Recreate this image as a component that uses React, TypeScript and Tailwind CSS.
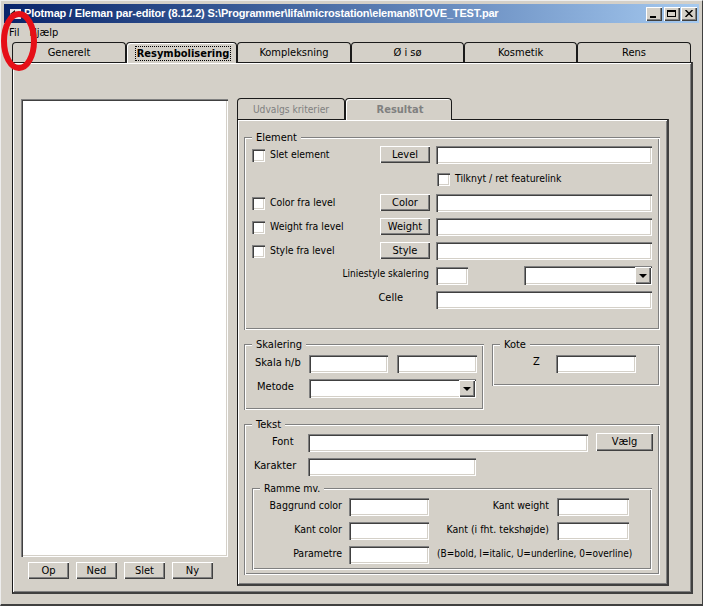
const sunken = "bg-white shadow-[inset_1px_1px_0_#808080,inset_2px_2px_0_#404040,inset_-1px_-1px_0_#ffffff,inset_-2px_-2px_0_#d4d0c8]";
const raised = "bg-[#d4d0c8] shadow-[inset_1px_1px_0_#ffffff,inset_-1px_-1px_0_#404040,inset_-2px_-2px_0_#808080]";
const etched = "shadow-[inset_1px_1px_0_#808080,inset_2px_2px_0_#ffffff,inset_-1px_-1px_0_#ffffff,inset_-2px_-2px_0_#808080]";

function Input({ w, className = "" }: { w: string; className?: string }) {
  return <div className={`${sunken} h-[18px] shrink-0 ${w} ${className}`} />;
}
function Btn({ label, w = "w-[50px]", h = "h-[17px]", className = "" }: { label: string; w?: string; h?: string; className?: string }) {
  return <div className={`${raised} ${w} ${h} shrink-0 flex items-center justify-center pb-px ${className}`}>{label}</div>;
}
function Check({ label, w = "w-[110px]" }: { label: string; w?: string }) {
  return (
    <div className={`flex items-center gap-[5px] ${w} shrink-0`}>
      <div className={`${sunken} w-[13px] h-[13px]`} />
      <span className="pb-[2px] text-[10.4px]">{label}</span>
    </div>
  );
}
function Arrow() {
  return (
    <div className={`${raised} absolute right-[1px] top-[1px] w-[16px] h-[17px] flex items-center justify-center`}>
      <svg width="8" height="4" viewBox="0 0 8 4"><path d="M0 0h8L4 4z" fill="#000" /></svg>
    </div>
  );
}
function Combo({ w }: { w: string }) {
  return (
    <div className={`${sunken} relative h-[19px] shrink-0 ${w}`}>
      <Arrow />
    </div>
  );
}
function Legend({ text, left = "left-[8px]" }: { text: string; left?: string }) {
  return <span className={`absolute ${left} top-[-6px] bg-[#d4d0c8] px-[4px] leading-[13px]`}>{text}</span>;
}
function ElementRow({ check, btn, mb = "mb-[6px]" }: { check: string; btn: string; mb?: string }) {
  return (
    <div className={`flex items-start h-[18px] ${mb}`}>
      <div className="flex items-center h-[18px]"><Check label={check} w="w-[128px]" /></div>
      <Btn label={btn} />
      <Input w="w-[216px]" className="ml-[6px]" />
    </div>
  );
}
function Tab({ label, w, h, active = false, focus = false, disabled = false, small = false }: { label: string; w: string; h: string; active?: boolean; focus?: boolean; disabled?: boolean; small?: boolean }) {
  return (
    <div
      className={`${w} ${h} shrink-0 flex items-center justify-center rounded-t-[4px] border-t border-l border-r border-[#1a1a1a] bg-[#d4d0c8] ${
        active ? "font-bold relative z-10 border-b-0 pl-[3px] shadow-[inset_1px_1px_0_#ffffff]" : ""
      } ${disabled ? "text-[#808080]" : "text-black"} ${small ? "text-[10.2px]" : ""}`}
    >
      <span className={focus ? "outline-1 outline-dotted outline-black px-px leading-[13px]" : ""}>{label}</span>
    </div>
  );
}

export default function App() {
  return (
    <div className="relative w-[703px] h-[606px] overflow-hidden bg-[#d4d0c8] border-t-[1px] border-l-[1px] border-t-[#eeeeee] border-l-[#eeeeee] border-r-[1px] border-b-[2px] border-r-[#404040] border-b-[#404040] pt-[3px] px-[3px] text-[11px] leading-[13px] text-black font-['DejaVu_Sans_Condensed','Liberation_Sans',sans-serif]">
      {/* title bar */}
      <div className="h-[19px] flex items-center pl-[5px] pr-[2px] bg-gradient-to-r from-[#0a246a] to-[#a6caf0]">
        <svg width="14" height="14" viewBox="0 0 14 14" className="shrink-0">
          <rect x="1" y="2" width="11" height="10" fill="#e8e8e8" />
          <path d="M1 7l5-4v8z" fill="#111" />
        </svg>
        <span className="ml-px text-white font-bold text-[11px] tracking-[-0.18px] whitespace-nowrap font-['Liberation_Sans',Arial,sans-serif]">Plotmap / Eleman par-editor (8.12.2) S:\Programmer\lifa\microstation\eleman8\TOVE_TEST.par</span>
        <div className="ml-auto flex items-center">
          <div className={`${raised} w-[16px] h-[14px] flex items-end pl-[4px] pb-[3px]`}><div className="w-[6px] h-[2px] bg-black" /></div>
          <div className={`${raised} w-[16px] h-[14px] ml-[2px] p-[3px] pr-[4px] pb-[4px]`}><div className="w-full h-full border border-t-2 border-black" /></div>
          <div className={`${raised} w-[16px] h-[14px] ml-px flex items-center justify-center`}>
            <svg width="8" height="7" viewBox="0 0 8 7"><path d="M0.5 0L7.5 7M7.5 0L0.5 7" stroke="#000" strokeWidth="1.5" /></svg>
          </div>
        </div>
      </div>
      {/* menu */}
      <div className="h-[19px] flex items-center pl-[5px] gap-[10px]">
        <span>Fil</span>
        <span>Hjælp</span>
      </div>
      {/* tabs */}
      <div className="flex ml-[8px] h-[20px] mr-[6px]">
        <Tab label="Generelt" w="w-[114px]" h="h-[20px]" />
        <Tab label="Resymbolisering" w="w-[111px]" h="h-[21px]" active focus />
        <Tab label="Kompleksning" w="w-[114px]" h="h-[20px]" />
        <Tab label="Ø i sø" w="w-[113px]" h="h-[20px]" />
        <Tab label="Kosmetik" w="w-[113px]" h="h-[20px]" />
        <Tab label="Rens" w="w-[114px]" h="h-[20px]" />
      </div>
      {/* tab panel */}
      <div className="ml-[8px] w-[681px] h-[532px] border-t border-l border-[#1a1a1a] border-r-2 border-b-2 border-r-[#404040] border-b-[#404040] shadow-[inset_1px_1px_0_#ffffff,inset_-1px_-1px_0_#808080] flex pt-[36px] pl-[8px]">
        {/* left column */}
        <div className="w-[208px] shrink-0">
          <div className={`${sunken} h-[458px] w-[207px]`} />
          <div className="flex gap-[7px] pl-[7px] mt-[5px]">
            <Btn label="Op" w="w-[41px]" />
            <Btn label="Ned" w="w-[41px]" />
            <Btn label="Slet" w="w-[41px]" />
            <Btn label="Ny" w="w-[41px]" />
          </div>
        </div>
        {/* right column */}
        <div className="ml-[8px] w-[432px] shrink-0 -mt-[1px]">
          <div className="flex h-[21px]">
            <Tab label="Udvalgs kriterier" w="w-[108px]" h="h-[21px]" disabled small />
            <Tab label="Resultat" w="w-[107px]" h="h-[22px]" active disabled />
          </div>
          <div className="h-[467px] border-t border-l border-[#1a1a1a] border-r-2 border-b-2 border-r-[#404040] border-b-[#404040] shadow-[inset_1px_1px_0_#ffffff,inset_-1px_-1px_0_#808080] pt-[17px] pl-[6px]">
            {/* Element */}
            <div className={`${etched} relative w-[416px] h-[193px] pt-[9px] pl-[8px]`}>
              <Legend text="Element" />
              <ElementRow check="Slet element" btn="Level" mb="mb-[8px]" />
              <div className="flex items-center h-[14px] pl-[185px] mb-[8px]">
                <Check label="Tilknyt / ret featurelink" w="w-[200px]" />
              </div>
              <ElementRow check="Color fra level" btn="Color" />
              <ElementRow check="Weight fra level" btn="Weight" />
              <ElementRow check="Style fra level" btn="Style" />
              <div className="flex items-center h-[19px] mb-[6px]">
                <span className="w-[177px] text-right pb-[5px] text-[10px]">Liniestyle skalering</span>
                <Input w="w-[32px]" className="ml-[7px]" />
                <Combo w="w-[128px] ml-[56px]" />
              </div>
              <div className="flex items-center h-[18px]">
                <span className="w-[152px] text-right pr-px pb-[5px]">Celle</span>
                <Input w="w-[216px]" className="ml-[32px]" />
              </div>
            </div>
            {/* Skalering + Kote */}
            <div className="flex mt-[14px] gap-[8px]">
              <div className={`${etched} relative w-[240px] h-[66px] pt-[11px] pl-[11px]`}>
                <Legend text="Skalering" />
                <div className="flex items-center h-[18px]">
                  <span className="w-[54px] pb-[4px]">Skala h/b</span>
                  <Input w="w-[79px]" />
                  <Input w="w-[80px]" className="ml-[9px]" />
                </div>
                <div className="flex items-center h-[19px] mt-[6px]">
                  <span className="w-[54px] pl-[2px] pb-[5px]">Metode</span>
                  <Combo w="w-[167px]" />
                </div>
              </div>
              <div className={`${etched} relative w-[168px] h-[42px] pt-[11px] pl-[41px]`}>
                <Legend text="Kote" />
                <div className="flex items-center h-[18px]">
                  <span className="w-[23px] pb-[5px]">Z</span>
                  <Input w="w-[80px]" />
                </div>
              </div>
            </div>
            {/* Tekst */}
            <div className={`${etched} relative w-[416px] h-[151px] mt-[14px] pt-[10px] pl-[8px]`}>
              <Legend text="Tekst" />
              <div className="flex items-center h-[18px]">
                <span className="w-[56px] pl-[20px] pb-[3px]">Font</span>
                <Input w="w-[280px]" />
                <Btn label="Vælg" w="w-[57px]" h="h-[18px]" className="ml-[8px] -mt-[3px]" />
              </div>
              <div className="flex items-center h-[18px] mt-[6px]">
                <span className="w-[56px] pl-[2px] pb-[3px]">Karakter</span>
                <Input w="w-[168px]" />
              </div>
              <div className={`${etched} relative w-[400px] h-[82px] mt-[12px] pt-[10px] pl-[4px] text-[10.5px]`}>
                <Legend text="Ramme mv." />
                <div className="flex items-center h-[18px]">
                  <span className="w-[86px] text-right pb-[3px]">Baggrund color</span>
                  <Input w="w-[80px]" className="ml-[7px]" />
                  <span className="w-[120px] text-right pb-[3px]">Kant weight</span>
                  <Input w="w-[72px]" className="ml-[8px]" />
                </div>
                <div className="flex items-center h-[18px] mt-[6px]">
                  <span className="w-[86px] text-right pb-[3px]">Kant color</span>
                  <Input w="w-[80px]" className="ml-[7px]" />
                  <span className="w-[120px] text-right pb-[3px]">Kant (i fht. tekshøjde)</span>
                  <Input w="w-[72px]" className="ml-[8px]" />
                </div>
                <div className="flex items-center h-[18px] mt-[6px]">
                  <span className="w-[86px] text-right pb-[3px]">Parametre</span>
                  <Input w="w-[80px]" className="ml-[7px]" />
                  <span className="ml-[8px] whitespace-nowrap pb-[3px] text-[10px]">(B=bold, I=italic, U=underline, 0=overline)</span>
                </div>
              </div>
            </div>
          </div>
        </div>
      </div>
      {/* red annotation */}
      <svg width="40" height="66" viewBox="0 0 40 66" className="absolute left-[-1px] top-[7px] pointer-events-none">
        <ellipse cx="19" cy="33" rx="15" ry="27" fill="none" stroke="#e60f17" strokeWidth="6" />
      </svg>
    </div>
  );
}
